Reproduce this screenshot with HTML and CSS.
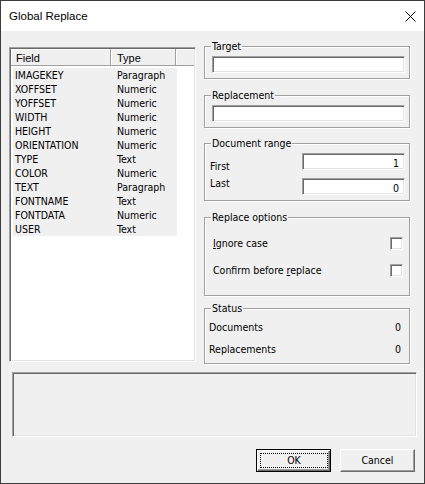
FILE: index.html
```html
<!DOCTYPE html>
<html>
<head>
<meta charset="utf-8">
<title>Global Replace</title>
<link rel="stylesheet" href="styles.css">
</head>
<body>
<div class="window">
  <div class="titlebar">
    <span class="title">Global Replace</span>
    <svg class="close" width="11" height="11" viewBox="0 0 11 11"><path d="M0.5 0.5 L10.5 10.5 M10.5 0.5 L0.5 10.5" stroke="#000" stroke-width="1" fill="none"/></svg>
  </div>
  <div class="client">
    <div class="main">
      <div class="listview">
        <div class="lv-head">
          <div class="lv-h h-field">Field</div>
          <div class="lv-h h-type">Type</div>
          <div class="lv-h h-fill"></div>
        </div>
        <div class="lv-body">
          <div class="lv-row"><span class="c1">IMAGEKEY</span><span class="c2">Paragraph</span></div>
          <div class="lv-row"><span class="c1">XOFFSET</span><span class="c2">Numeric</span></div>
          <div class="lv-row"><span class="c1">YOFFSET</span><span class="c2">Numeric</span></div>
          <div class="lv-row"><span class="c1">WIDTH</span><span class="c2">Numeric</span></div>
          <div class="lv-row"><span class="c1">HEIGHT</span><span class="c2">Numeric</span></div>
          <div class="lv-row"><span class="c1">ORIENTATION</span><span class="c2">Numeric</span></div>
          <div class="lv-row"><span class="c1">TYPE</span><span class="c2">Text</span></div>
          <div class="lv-row"><span class="c1">COLOR</span><span class="c2">Numeric</span></div>
          <div class="lv-row"><span class="c1">TEXT</span><span class="c2">Paragraph</span></div>
          <div class="lv-row"><span class="c1">FONTNAME</span><span class="c2">Text</span></div>
          <div class="lv-row"><span class="c1">FONTDATA</span><span class="c2">Numeric</span></div>
          <div class="lv-row"><span class="c1">USER</span><span class="c2">Text</span></div>
        </div>
      </div>
      <div class="side">
        <div class="group g-target">
          <div class="legend">Target</div>
          <div class="textbox tb-wide"></div>
        </div>
        <div class="group g-repl">
          <div class="legend">Replacement</div>
          <div class="textbox tb-wide"></div>
        </div>
        <div class="group g-range">
          <div class="legend">Document range</div>
          <div class="range-row r-first">
            <span class="range-label">First</span>
            <div class="textbox tb-num">1</div>
          </div>
          <div class="range-row r-last">
            <span class="range-label">Last</span>
            <div class="textbox tb-num">0</div>
          </div>
        </div>
        <div class="group g-opts">
          <div class="legend">Replace options</div>
          <div class="opt-row o-first">
            <span class="opt-label"><u>I</u>gnore case</span>
            <span class="check"></span>
          </div>
          <div class="opt-row o-second">
            <span class="opt-label">Confirm before <u>r</u>eplace</span>
            <span class="check"></span>
          </div>
        </div>
        <div class="group g-status">
          <div class="legend">Status</div>
          <div class="stat-row s-first">
            <span class="stat-label">Documents</span>
            <span class="stat-val">0</span>
          </div>
          <div class="stat-row s-second">
            <span class="stat-label">Replacements</span>
            <span class="stat-val">0</span>
          </div>
        </div>
      </div>
    </div>
    <div class="panel"></div>
    <div class="buttons">
      <div class="btn btn-default"><span class="focus">OK</span></div>
      <div class="btn">Cancel</div>
    </div>
  </div>
</div>
</body>
</html>
```
FILE: styles.css
```css
* { box-sizing: border-box; }
html, body { margin: 0; padding: 0; }
body {
  background: #fff;
  font-family: "DejaVu Sans Condensed", "DejaVu Sans", sans-serif;
  font-stretch: condensed;
  font-size: 10.5px;
  color: #000;
}
.window {
  width: 425px;
  height: 484px;
  border: 1px solid #3c3c3c;
  display: flex;
  flex-direction: column;
  background: #f0f0f0;
}
.titlebar {
  height: 30px;
  flex: none;
  background: #fff;
  display: flex;
  align-items: center;
  justify-content: space-between;
  padding: 0 8px 0 8px;
}
.title {
  font-family: "Liberation Sans", Arial, sans-serif;
  font-stretch: normal;
  font-size: 11.5px;
}
.close { display: block; }
.client {
  flex: 1;
  display: flex;
  flex-direction: column;
}
.main {
  display: flex;
  align-items: flex-start;
  height: 334px;
  padding: 15px 0 0 8px;
}
.listview, .textbox, .check, .panel {
  border: 1px solid;
  border-color: #a0a0a0 #fff #fff #a0a0a0;
  box-shadow: inset 1px 1px 0 #696969, inset -1px -1px 0 #e3e3e3;
}
.listview {
  width: 187px;
  height: 315px;
  margin-top: 1px;
  padding: 1px;
  background: #fff;
}
.lv-head {
  display: flex;
  height: 17px;
  font-family: "Liberation Sans", Arial, sans-serif;
  font-stretch: normal;
  font-size: 11px;
}
.lv-h {
  background: #f0f0f0;
  border-bottom: 1px solid #a0a0a0;
  border-right: 1px solid #a0a0a0;
  padding-top: 2px;
  line-height: 14px;
  box-shadow: inset 1px 1px 0 #fff;
}
.h-field { width: 100px; padding-left: 5px; }
.h-type { width: 65px; padding-left: 6px; }
.h-fill { flex: 1; border-right: none; }
.lv-body { padding: 2px 0 0 2px; }
.lv-row {
  display: flex;
  width: 164px;
  height: 14px;
  line-height: 14px;
  background: #f0f0f0;
}
.c1 { width: 102px; padding-left: 2px; }
.c2 { padding-left: 2px; }

.side {
  width: 206px;
  margin-left: 8px;
  display: flex;
  flex-direction: column;
}
.group {
  border: 1px solid #a0a0a0;
  box-shadow: 1px 1px 0 #fff, inset 1px 1px 0 #fff;
  padding: 0 4px 0 7px;
}
.legend {
  display: table;
  margin: -7px 0 0 -1px;
  padding: 0 1px;
  line-height: 13px;
  background: #f0f0f0;
}
.g-target { padding-bottom: 5px; }
.g-repl { margin-top: 16px; padding-bottom: 5px; }
.g-range { margin-top: 15px; padding-bottom: 5px; }
.g-opts { margin-top: 16px; padding-bottom: 18px; }
.g-status { margin-top: 12px; padding-bottom: 7px; }

.textbox {
  height: 17px;
  background: #fff;
}
.tb-wide { margin-top: 3px; }
.tb-num {
  width: 103px;
  padding: 3px 5px 0 0;
  line-height: 13px;
  text-align: right;
}
.range-row {
  display: flex;
  align-items: flex-start;
  justify-content: space-between;
  height: 17px;
}
.r-first { margin-top: 3px; }
.r-last { margin-top: 8px; }
.range-label { margin-left: -2px; line-height: 13px; }
.r-first .range-label { margin-top: 7px; }
.r-last .range-label { margin-top: -1px; }

.opt-row {
  display: flex;
  align-items: center;
  justify-content: space-between;
  height: 13px;
  line-height: 13px;
}
.o-first { margin-top: 13px; }
.o-second { margin-top: 14px; }
.opt-label { margin-left: 1px; }
.check {
  width: 13px;
  height: 13px;
  margin-right: 2px;
  background: #fff;
}

.stat-row {
  display: flex;
  justify-content: space-between;
  height: 13px;
  line-height: 13px;
}
.s-first { margin-top: 6px; }
.s-second { margin-top: 9px; }
.stat-label { margin-left: -3px; }
.stat-val { margin-right: 4px; }

.panel {
  margin: 7px 0 0 11px;
  width: 405px;
  height: 65px;
  background: #f0f0f0;
}
.buttons {
  display: flex;
  justify-content: flex-end;
  gap: 9px;
  margin-top: 12px;
  padding-right: 9px;
}
.btn {
  width: 75px;
  height: 23px;
  display: flex;
  align-items: center;
  justify-content: center;
  border: 1px solid;
  border-color: #fff #696969 #696969 #fff;
  box-shadow: inset -1px -1px 0 #a0a0a0;
  background: #f0f0f0;
  line-height: 13px;
  padding-bottom: 1px;
}
.btn-default {
  border: 1px solid #000;
  box-shadow: inset 1px 1px 0 #fff, inset -1px -1px 0 #696969, inset -2px -2px 0 #a0a0a0;
  padding: 3px 2px 3px 3px;
}
.focus {
  flex: 1;
  align-self: stretch;
  display: flex;
  align-items: center;
  justify-content: center;
  border: 1px dotted #000;
  padding-bottom: 1px;
}
```
